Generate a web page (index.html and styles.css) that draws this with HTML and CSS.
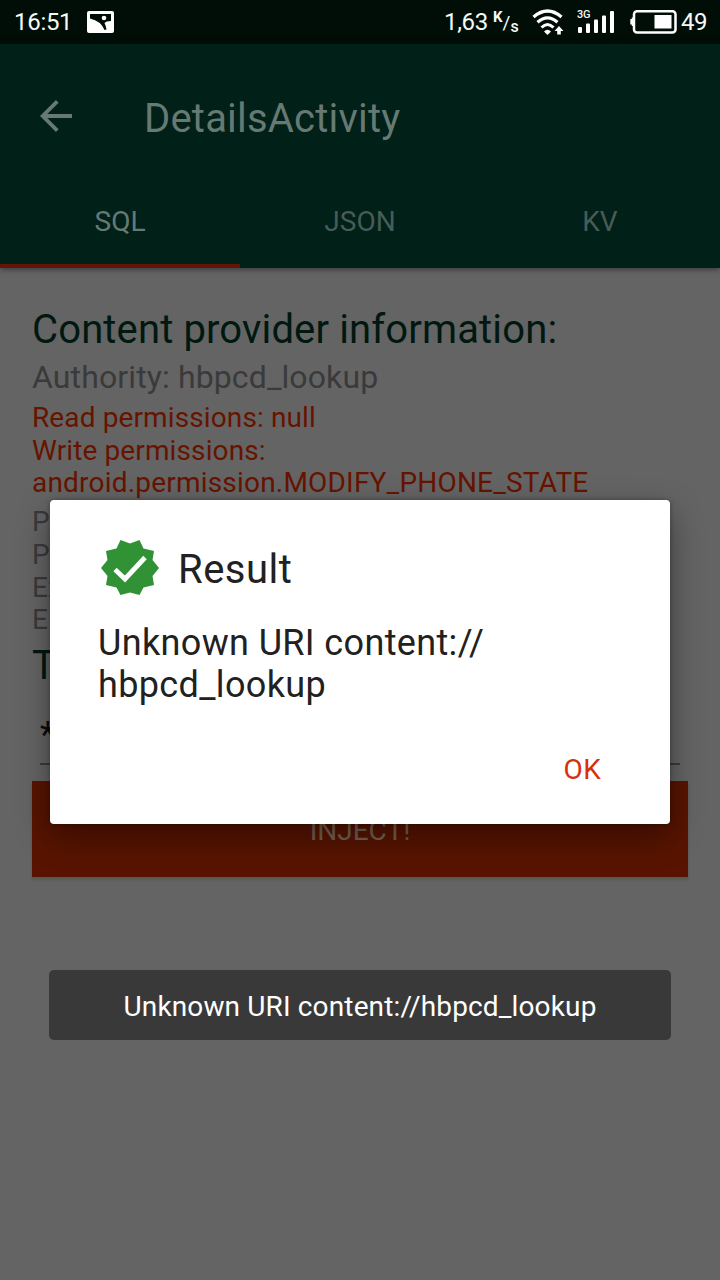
FILE: index.html
```html
<!DOCTYPE html>
<html lang="en">
<head>
<meta charset="utf-8">
<title>DetailsActivity</title>
<link rel="stylesheet" href="styles.css">
</head>
<body>
<div class="screen">
  <header class="status">
    <span class="clock">16:51</span>
    <svg class="picture-icon" width="27" height="22" viewBox="0 0 27 22">
      <rect width="27" height="22" rx="2" fill="#fff"/>
      <path d="M3 3H24V10Q19 10 17.500 12Q19 15 19.500 18.500L17.500 19Q14 10 3 7.500Z" fill="#000e07"/>
      <circle cx="17" cy="7" r="2.300" fill="#fff"/>
    </svg>
    <span class="speed">1,63</span>
    <span class="unit"><span class="unit-k">K</span><span class="unit-slash">/</span><span class="unit-s">s</span></span>
    <svg class="wifi-icon" width="32" height="27" viewBox="0 0 32 27" fill="none" stroke="#fff">
      <path d="M1.500 8Q15.500-4 29.500 8" stroke-width="3.200"/>
      <path d="M5.500 13.300Q15.500 4.500 25.500 13.300" stroke-width="3.200"/>
      <path d="M9.500 18.500Q15.500 12.500 21.500 18.500" stroke-width="3"/>
      <path d="M12 22.500Q15.500 19 19 22.500L15.500 26Z" fill="#fff" stroke="none"/>
      <path d="M27 17L31.500 22H28.800V25.500H25.200V22H22.500Z" fill="#fff" stroke="none"/>
    </svg>
    <span class="signal">
      <span class="network">3G</span>
      <svg width="38" height="24" viewBox="0 0 38 24" fill="#fff">
        <rect x="1" y="17" width="4" height="6" rx="1"/><rect x="9" y="13.500" width="4" height="9.500" rx="1"/><rect x="17" y="9.500" width="4" height="13.500" rx="1"/><rect x="25" y="5.500" width="4" height="17.500" rx="1"/><rect x="33" y="1" width="4" height="22" rx="1"/>
      </svg>
    </span>
    <svg class="battery-icon" width="47" height="24" viewBox="0 0 47 24">
      <rect x="4" y="1.200" width="41.500" height="21.200" rx="3" fill="none" stroke="#fff" stroke-width="2.500"/>
      <path d="M3 7.500V16H1.800V14.500H0.300V9H1.800V7.500Z" fill="#fff"/>
      <rect x="24.500" y="5" width="17" height="13.500" fill="#fff"/>
    </svg>
    <span class="percent">49</span>
  </header>

  <div class="appbar">
    <div class="toolbar">
      <svg class="back" width="32" height="32" viewBox="0 0 32 32" fill="none" stroke="#667973" stroke-width="3.800">
        <path d="M32 16H3M17.300 1.400L2.700 16L17.300 30.600"/>
      </svg>
      <h1 class="title">DetailsActivity</h1>
    </div>
    <nav class="tabs">
      <span class="tab tab-active">SQL</span>
      <span class="tab">JSON</span>
      <span class="tab">KV</span>
    </nav>
  </div>

  <main class="content">
    <h2 class="heading">Content provider information:</h2>
    <p class="authority">Authority: hbpcd_lookup</p>
    <p class="rows permissions">Read permissions: null<br>Write permissions:<br><span class="permission-name">android.permission.MODIFY_PHONE_STATE</span></p>
    <p class="rows">P<br>P<br>Ex<br>E</p>
    <h2 class="heading heading-next">T</h2>
    <div class="field">*</div>
    <div class="inject">INJECT!</div>
  </main>

  <section class="dialog">
    <div class="dialog-head">
      <svg class="badge" width="60" height="58" viewBox="0 0 60 58">
        <path d="M30 4.500L39.500 1L43.500 9.500L54 12L52.500 21L59 29L52.500 37L54 46L43.500 48.500L39.500 56L30 53.500L20.500 56L16.500 48.500L6 46L7.500 37L1 29L7.500 21L6 12L16.500 9.500L20.500 1Z" fill="#309135"/>
        <path d="M15 30.500L25 40L45 18.500" fill="none" stroke="#fff" stroke-width="4.800"/>
      </svg>
      <h2 class="dialog-title">Result</h2>
    </div>
    <p class="message">Unknown URI content://<br>hbpcd_lookup</p>
    <div class="actions"><span class="ok">OK</span></div>
  </section>

  <div class="toast"><span>Unknown URI content://hbpcd_lookup</span></div>
</div>
</body>
</html>
```
FILE: styles.css
```css
* { box-sizing: border-box; }
body { margin: 0; font-family: Roboto, "Liberation Sans", sans-serif; font-weight: 400; }
h1, h2, p { margin: 0; font-weight: 400; white-space: nowrap; }
svg { display: block; flex: none; }
.screen { position: relative; width: 720px; height: 1280px; background: #646464; overflow: hidden; }

.status { display: flex; align-items: center; height: 44px; padding: 0 14px; background: #000e07; color: #f4fbf7; font-size: 24px; letter-spacing: -.3px; }
.clock { width: 73px; }
.speed { margin-left: auto; width: 44px; }
.unit { display: flex; margin-left: 5px; width: 24px; height: 24px; letter-spacing: 0; }
.unit-k { font-size: 15px; font-weight: 700; line-height: 15px; }
.unit-slash { font-size: 19px; line-height: 25px; }
.unit-s { font-size: 16px; font-weight: 500; line-height: 33px; }
.wifi-icon { margin-left: 15px; }
.signal { position: relative; margin-left: 13px; }
.network { position: absolute; left: 0; top: -1px; font-size: 11px; line-height: 12px; font-weight: 500; letter-spacing: -.3px; }
.battery-icon { margin-left: 15px; }
.percent { margin-left: 4px; width: 25px; letter-spacing: -.6px; }

.appbar { position: relative; height: 224px; background: #002018; box-shadow: 0 1px 6px rgba(0,0,0,.5); }
.toolbar { display: flex; align-items: center; height: 128px; padding: 20px 0 0 40px; }
.back { margin-top: -4px; }
.title { margin: 2px 0 0 72px; font-size: 40px; line-height: 48px; letter-spacing: .2px; color: #667973; }
.tabs { display: grid; grid-template-columns: repeat(3, 1fr); height: 96px; }
.tab { display: flex; align-items: center; justify-content: center; padding-top: 6px; font-size: 28px; color: #475c56; border-bottom: 4px solid transparent; }
.tab-active { color: #667973; border-bottom-color: #661405; }

.content { padding: 38px 32px 0; }
.heading { font-size: 40px; line-height: 47px; letter-spacing: .14px; color: #001810; }
.heading-next { margin-top: 5px; }
.authority { margin-top: 5px; font-size: 32px; line-height: 38px; letter-spacing: .12px; color: #3a3a3a; }
.rows { margin-top: 6px; font-size: 28px; line-height: 32.7px; letter-spacing: .12px; color: #3a3a3a; }
.permissions { color: #661400; }
.permission-name { letter-spacing: .2px; }
.field { margin: 14px 8px 0; height: 62px; font-size: 36px; line-height: 64px; color: #0b0b0b; border-bottom: 2px solid #3b3b3b; }
.inject { display: flex; align-items: center; justify-content: center; height: 96px; margin-top: 16px; padding-top: 3px; background: #581400; color: #786154; font-size: 28px; box-shadow: 0 3px 2px #555b54; }

.dialog { position: absolute; left: 50px; top: 500px; width: 620px; height: 324px; padding: 39px 48px 0; background: #fff; border-radius: 4px; box-shadow: 0 12px 32px rgba(0,0,0,.4), 0 0 5px rgba(0,0,0,.3); color: #212121; }
.dialog-head { display: flex; align-items: center; height: 58px; padding-left: 2px; }
.dialog-title { margin: 4px 0 0 18px; font-size: 40px; line-height: 48px; letter-spacing: .5px; }
.message { margin-top: 25px; font-size: 36px; line-height: 42px; letter-spacing: .36px; }
.actions { display: flex; justify-content: flex-end; margin-top: 47px; padding-right: 21px; }
.ok { font-size: 28px; line-height: 33px; letter-spacing: .3px; color: #d5300a; }

.toast { position: absolute; left: 49px; top: 970px; width: 622px; height: 70px; display: flex; align-items: center; justify-content: center; padding-top: 3px; border-radius: 5px; background: #393939; color: #fff; font-size: 28px; letter-spacing: .14px; white-space: nowrap; }
```
